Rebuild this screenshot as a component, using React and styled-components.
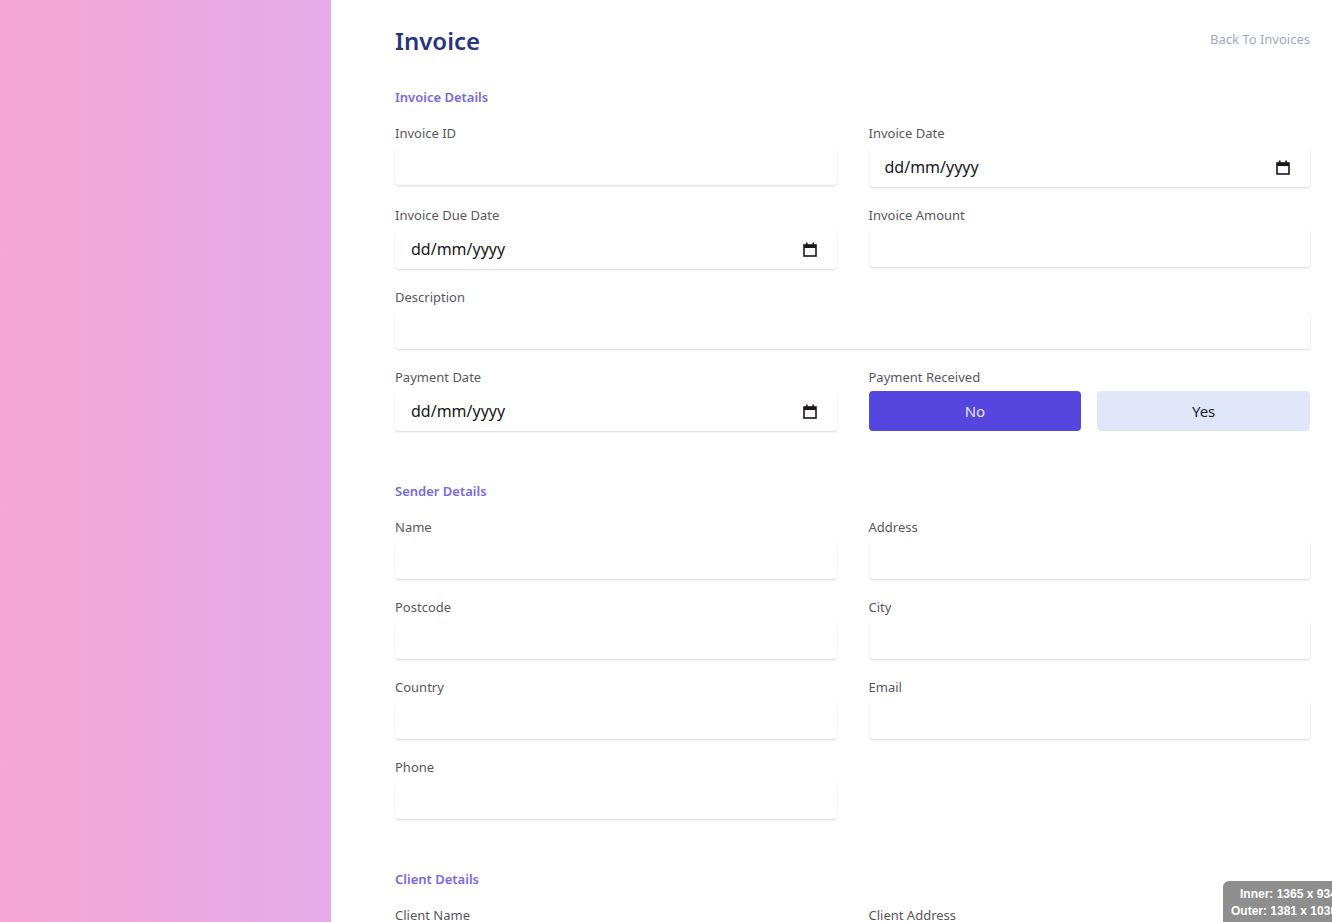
import React, { useState } from "react";
import styled, { createGlobalStyle } from "styled-components";

const GlobalStyle = createGlobalStyle`
  * { box-sizing: border-box; }
  body {
    margin: 0;
    font-family: "Noto Sans", "Open Sans", Arial, sans-serif;
    background: #fff;
  }
`;

export default function App() {
  const [received, setReceived] = useState("no");

  return (
    <Page>
      <GlobalStyle />
      <Sidebar />
      <Main>
        <TopBar>
          <Title>Invoice</Title>
          <BackLink href="#">Back To Invoices</BackLink>
        </TopBar>

        <Section>
          <SectionTitle>Invoice Details</SectionTitle>
          <Grid>
            <TextField label="Invoice ID" />
            <DateField label="Invoice Date" />
            <DateField label="Invoice Due Date" />
            <TextField label="Invoice Amount" />
            <TextField label="Description" wide />
            <DateField label="Payment Date" />
            <Field>
              <Label>Payment Received</Label>
              <Toggle>
                <ToggleButton $active={received === "no"} onClick={() => setReceived("no")}>No</ToggleButton>
                <ToggleButton $active={received === "yes"} onClick={() => setReceived("yes")}>Yes</ToggleButton>
              </Toggle>
            </Field>
          </Grid>
        </Section>

        <Section>
          <SectionTitle>Sender Details</SectionTitle>
          <Grid>
            <TextField label="Name" />
            <TextField label="Address" />
            <TextField label="Postcode" />
            <TextField label="City" />
            <TextField label="Country" />
            <TextField label="Email" />
            <TextField label="Phone" />
          </Grid>
        </Section>

        <Section>
          <SectionTitle>Client Details</SectionTitle>
          <Grid>
            <TextField label="Client Name" />
            <TextField label="Client Address" />
            <TextField label="Client Postcode" />
            <TextField label="Client City" />
          </Grid>
        </Section>
      </Main>
      <SizeBadge>
        <div>Inner: 1365 x 934</div>
        <div>Outer: 1381 x 1030</div>
      </SizeBadge>
    </Page>
  );
}

function TextField({ label, wide }) {
  return (
    <Field $wide={wide}>
      <Label>{label}</Label>
      <Input type="text" />
    </Field>
  );
}

function DateField({ label }) {
  return (
    <Field>
      <Label>{label}</Label>
      <DateBox>
        <DateInput type="text" placeholder="dd/mm/yyyy" />
        <CalendarIcon width="14" height="15" viewBox="0 0 14 15">
          <rect x="1" y="3" width="12" height="11" fill="none" stroke="#1e1420" strokeWidth="1.6" />
          <rect x="1" y="3" width="12" height="3" fill="#1e1420" />
          <rect x="3" y="0.5" width="1.6" height="3" fill="#1e1420" />
          <rect x="9.4" y="0.5" width="1.6" height="3" fill="#1e1420" />
        </CalendarIcon>
      </DateBox>
    </Field>
  );
}

const Page = styled.div`
  display: flex;
  min-height: 100vh;
`;

const Sidebar = styled.aside`
  flex: 0 0 331px;
  background: linear-gradient(90deg, #f5a7d5 0%, #eda9df 50%, #e6ace9 100%);
`;

const Main = styled.main`
  flex: 1;
  padding: 25px 22px 40px 64px;
`;

const TopBar = styled.div`
  display: flex;
  justify-content: space-between;
  align-items: center;
`;

const Title = styled.h1`
  margin: 0;
  font-size: 24px;
  line-height: 32px;
  font-weight: 600;
  color: #27357e;
`;

const BackLink = styled.a`
  font-size: 13px;
  color: #9babc4;
  text-decoration: none;
  margin-top: -4px;
`;

const Section = styled.section`
  margin-top: 30px;
  & + & {
    margin-top: 50px;
  }
`;

const SectionTitle = styled.h2`
  margin: 0 0 16px;
  font-size: 13px;
  line-height: 20px;
  font-weight: 600;
  color: #7768e4;
`;

const Grid = styled.div`
  display: grid;
  grid-template-columns: 1fr 1fr;
  column-gap: 32px;
  row-gap: 18px;
  align-items: start;
`;

const Field = styled.div`
  display: flex;
  flex-direction: column;
  grid-column: ${(p) => (p.$wide ? "1 / -1" : "auto")};
`;

const Label = styled.label`
  font-size: 13px;
  line-height: 20px;
  color: #5a5560;
  margin-bottom: 4px;
`;

const Input = styled.input`
  height: 38px;
  width: 100%;
  border: none;
  border-radius: 4px;
  padding: 0 16px;
  font-family: inherit;
  font-size: 15px;
  background: #fff;
  box-shadow: 0 1px 2px rgba(0, 0, 0, 0.16);
  outline: none;
`;

const DateBox = styled.div`
  position: relative;
  height: 40px;
`;

const DateInput = styled(Input)`
  height: 40px;
  font-size: 16px;
  color: #111;
  &::placeholder {
    color: #1a1722;
    opacity: 1;
  }
`;

const CalendarIcon = styled.svg`
  position: absolute;
  right: 20px;
  top: 13px;
`;

const Toggle = styled.div`
  display: flex;
  gap: 16px;
`;

const ToggleButton = styled.button`
  flex: 1;
  height: 40px;
  border: none;
  border-radius: 4px;
  font-family: inherit;
  font-size: 15px;
  cursor: pointer;
  background: ${(p) => (p.$active ? "#5646e0" : "#e1e7fb")};
  color: ${(p) => (p.$active ? "#e6e4ff" : "#1c1a2a")};
`;

const SizeBadge = styled.div`
  position: fixed;
  left: 1223px;
  top: 881px;
  width: 130px;
  padding: 5px 0 4px 17px;
  background: #8e8e8e;
  border-top-left-radius: 6px;
  color: #fff;
  font-family: "Liberation Sans", Arial, sans-serif;
  font-weight: 700;
  font-size: 12px;
  line-height: 17px;
  white-space: nowrap;
  overflow: hidden;
  & div:last-child {
    margin-left: -9px;
  }
`;
